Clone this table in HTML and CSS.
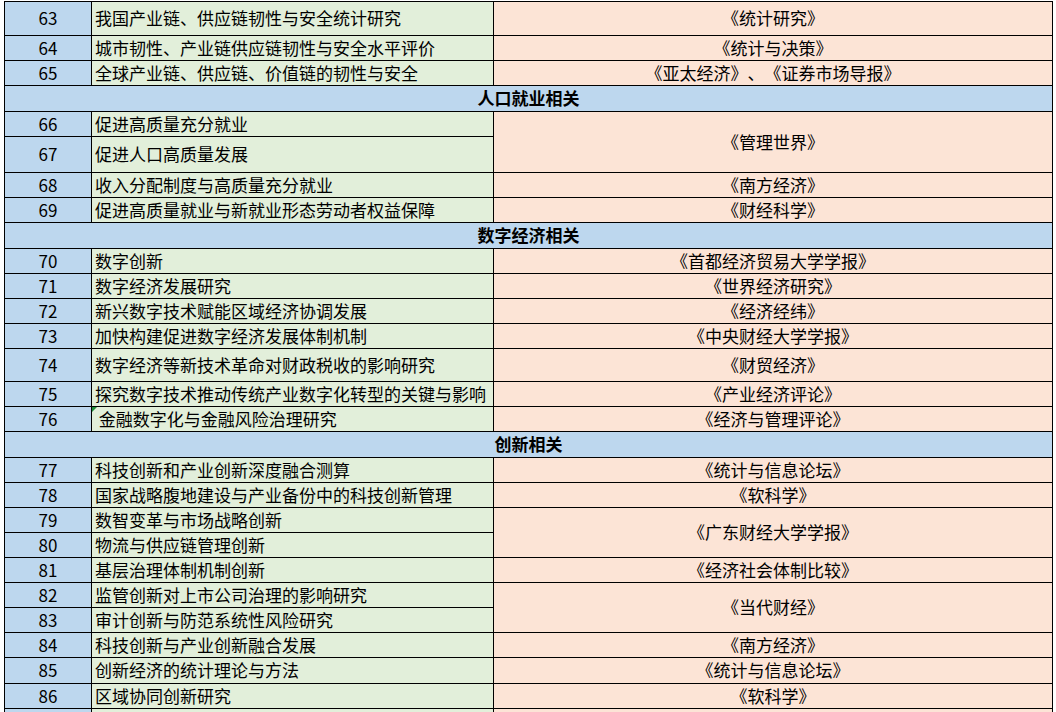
FILE: index.html
```html
<!DOCTYPE html>
<html lang="zh-CN">
<head>
<meta charset="utf-8">
<title>选题表</title>
<link rel="stylesheet" href="styles.css">
</head>
<body>
<div class="sheet">
  <div class="grid">
    <div class="cell a h34">63</div><div class="cell b">我国产业链、供应链韧性与安全统计研究</div><div class="cell c">《统计研究》</div>
    <div class="cell a">64</div><div class="cell b">城市韧性、产业链供应链韧性与安全水平评价</div><div class="cell c">《统计与决策》</div>
    <div class="cell a">65</div><div class="cell b">全球产业链、供应链、价值链的韧性与安全</div><div class="cell c">《亚太经济》、《证券市场导报》</div>
    <div class="cell head">人口就业相关</div>
    <div class="cell a">66</div><div class="cell b">促进高质量充分就业</div><div class="cell c span2">《管理世界》</div>
    <div class="cell a h36">67</div><div class="cell b">促进人口高质量发展</div>
    <div class="cell a">68</div><div class="cell b">收入分配制度与高质量充分就业</div><div class="cell c">《南方经济》</div>
    <div class="cell a">69</div><div class="cell b">促进高质量就业与新就业形态劳动者权益保障</div><div class="cell c">《财经科学》</div>
    <div class="cell head">数字经济相关</div>
    <div class="cell a">70</div><div class="cell b">数字创新</div><div class="cell c">《首都经济贸易大学学报》</div>
    <div class="cell a">71</div><div class="cell b">数字经济发展研究</div><div class="cell c">《世界经济研究》</div>
    <div class="cell a">72</div><div class="cell b">新兴数字技术赋能区域经济协调发展</div><div class="cell c">《经济经纬》</div>
    <div class="cell a">73</div><div class="cell b">加快构建促进数字经济发展体制机制</div><div class="cell c">《中央财经大学学报》</div>
    <div class="cell a h33">74</div><div class="cell b">数字经济等新技术革命对财政税收的影响研究</div><div class="cell c">《财贸经济》</div>
    <div class="cell a">75</div><div class="cell b">探究数字技术推动传统产业数字化转型的关键与影响</div><div class="cell c">《产业经济评论》</div>
    <div class="cell a">76</div><div class="cell b flag lead"> 金融数字化与金融风险治理研究</div><div class="cell c">《经济与管理评论》</div>
    <div class="cell head">创新相关</div>
    <div class="cell a">77</div><div class="cell b">科技创新和产业创新深度融合测算</div><div class="cell c">《统计与信息论坛》</div>
    <div class="cell a">78</div><div class="cell b">国家战略腹地建设与产业备份中的科技创新管理</div><div class="cell c">《软科学》</div>
    <div class="cell a">79</div><div class="cell b">数智变革与市场战略创新</div><div class="cell c span2">《广东财经大学学报》</div>
    <div class="cell a">80</div><div class="cell b">物流与供应链管理创新</div>
    <div class="cell a">81</div><div class="cell b">基层治理体制机制创新</div><div class="cell c">《经济社会体制比较》</div>
    <div class="cell a">82</div><div class="cell b">监管创新对上市公司治理的影响研究</div><div class="cell c span2">《当代财经》</div>
    <div class="cell a">83</div><div class="cell b">审计创新与防范系统性风险研究</div>
    <div class="cell a">84</div><div class="cell b">科技创新与产业创新融合发展</div><div class="cell c">《南方经济》</div>
    <div class="cell a h26">85</div><div class="cell b">创新经济的统计理论与方法</div><div class="cell c">《统计与信息论坛》</div>
    <div class="cell a">86</div><div class="cell b">区域协同创新研究</div><div class="cell c">《软科学》</div>
    <div class="cell a"></div><div class="cell b"></div><div class="cell c"></div>
  </div>
</div>
</body>
</html>
```

FILE: styles.css
```css
html, body {
  margin: 0;
  padding: 0;
  background: #ffffff;
  overflow: hidden;
  height: 712px;
}

body {
  font-family: "Noto Sans CJK SC", "Noto Sans", sans-serif;
  font-size: 17px;
  color: #000000;
  text-spacing-trim: space-all;
  font-feature-settings: "chws" 0, "halt" 0;
}

.sheet {
  padding: 1px 0 0 4px;
}

.grid {
  display: grid;
  grid-template-columns: 87px 402px 559px;
  grid-auto-rows: minmax(25px, auto);
  width: max-content;
  border-left: 1px solid #000;
  border-top: 1px solid #000;
}

.cell {
  box-sizing: border-box;
  border-right: 1px solid #000;
  border-bottom: 1px solid #000;
  display: flex;
  align-items: center;
  line-height: 1;
  white-space: nowrap;
  overflow: hidden;
  min-height: 25px;
  padding-bottom: 2px;
}

.a {
  grid-column: 1;
  background: #BDD7EE;
  justify-content: center;
}

.b {
  grid-column: 2;
  background: #E2EFDA;
  padding-left: 3px;
}

.c {
  grid-column: 3;
  background: #FCE4D6;
  justify-content: center;
}

.span2 {
  grid-row: span 2;
}

.head {
  grid-column: 1 / -1;
  background: #BDD7EE;
  justify-content: center;
  font-weight: bold;
  min-height: 26px;
}

.h26 { min-height: 26px; }
.h33 { min-height: 33px; }
.h34 { min-height: 34px; }
.h36 { min-height: 36px; }

.lead {
  white-space: pre;
}

.flag {
  position: relative;
}

.flag::before {
  content: "";
  position: absolute;
  left: 0;
  top: 0;
  width: 0;
  height: 0;
  border-top: 5px solid #1f8f3a;
  border-right: 5px solid transparent;
}
```
